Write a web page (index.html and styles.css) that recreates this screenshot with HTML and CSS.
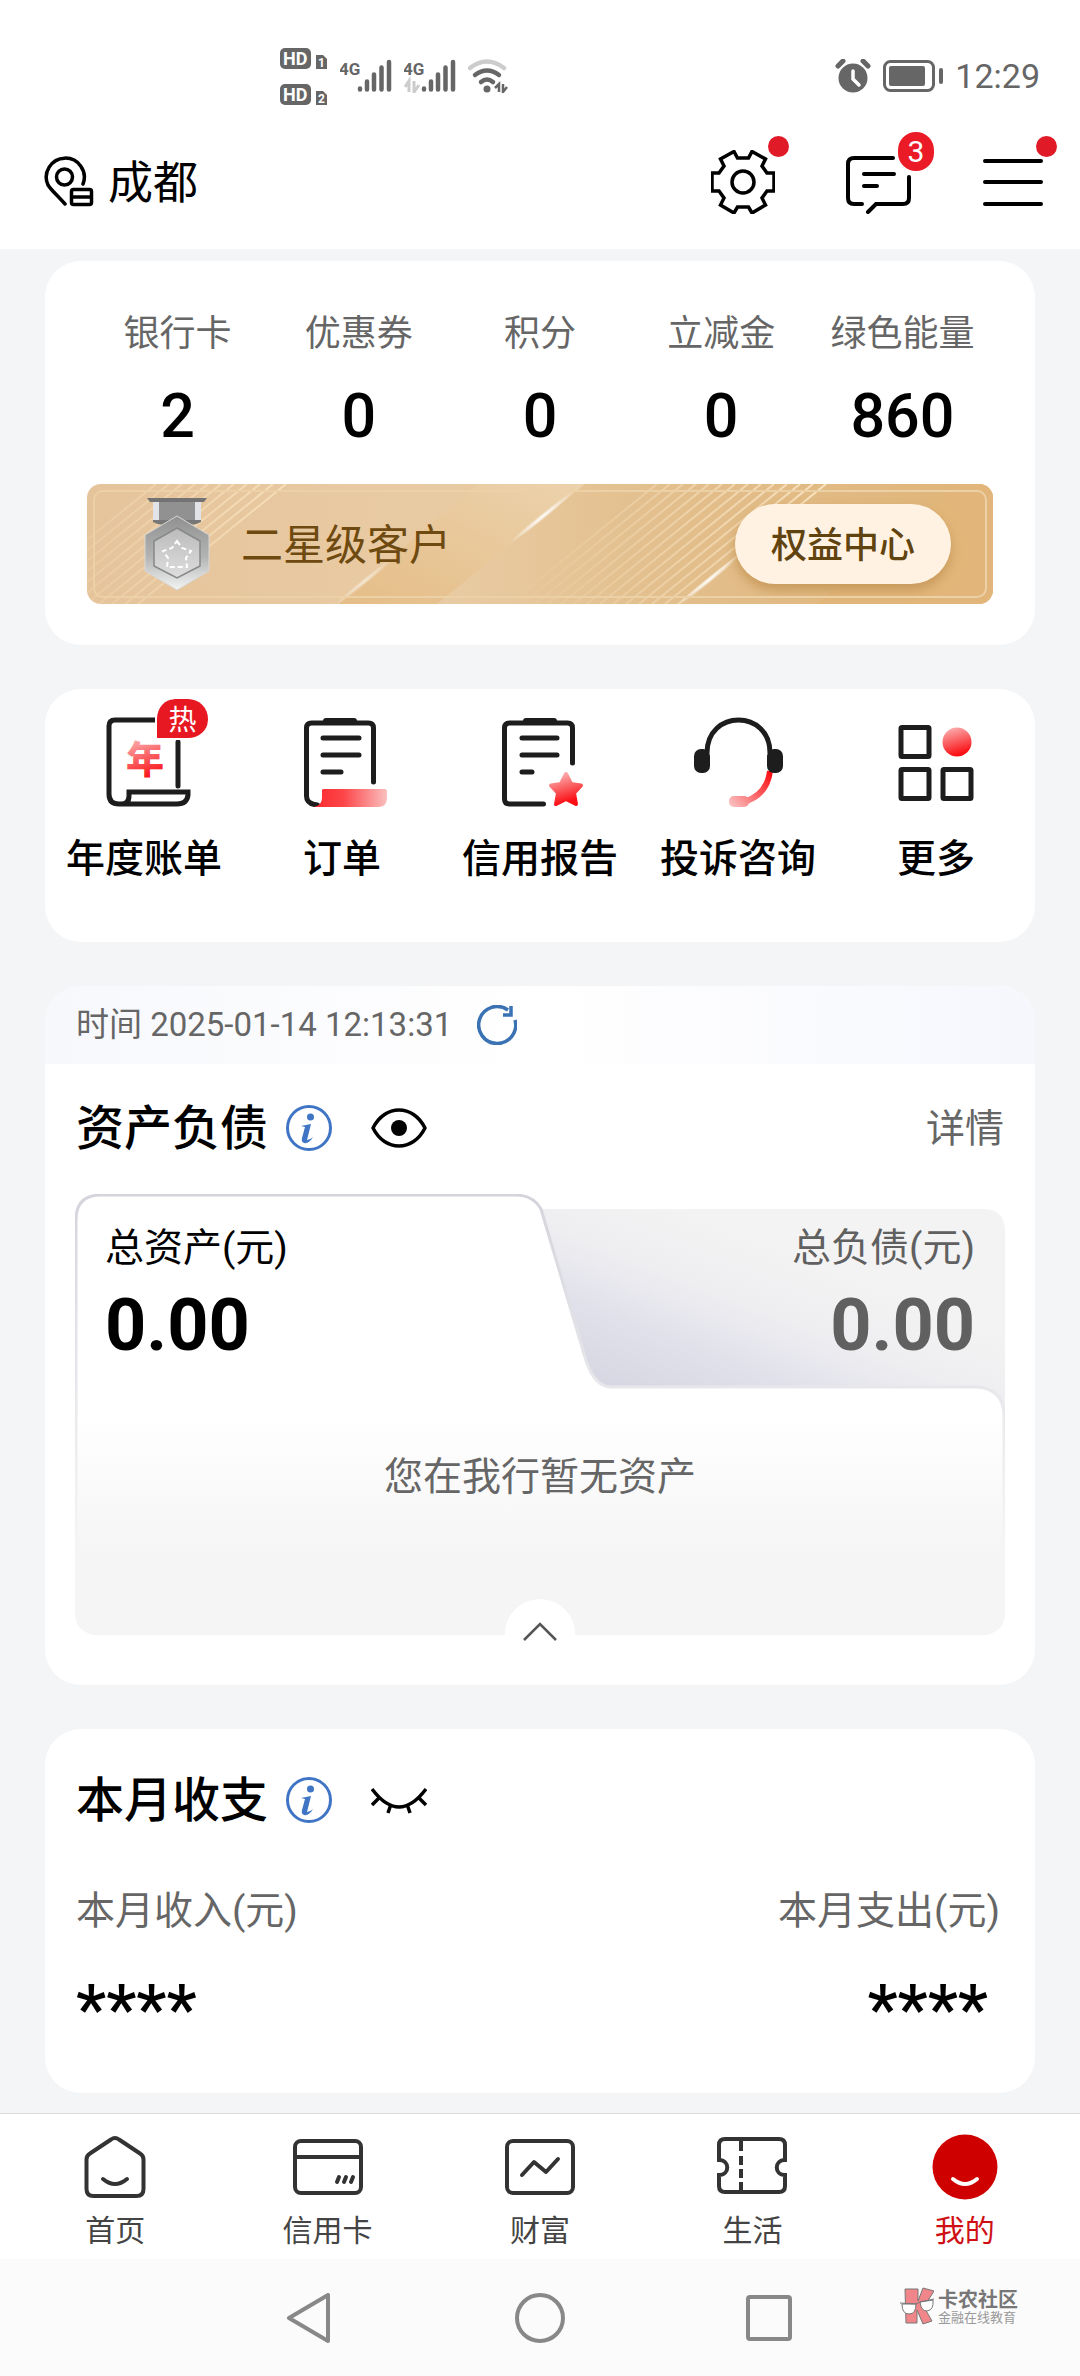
FILE: index.html
```html
<!DOCTYPE html>
<html lang="zh-CN">
<head>
<meta charset="utf-8">
<meta name="viewport" content="width=device-width, initial-scale=1">
<title>我的</title>
<link rel="stylesheet" href="styles.css">
</head>
<body>
<div class="status-bar">
  <div class="status-left">
    <svg width="48" height="58" viewBox="0 0 48 58" aria-hidden="true">
      <g fill="#666"><rect x="0" y="1" width="31" height="21" rx="5"/><path d="M36 8h7l4 4v10H36z"/><rect x="0" y="37" width="31" height="21" rx="5"/><path d="M36 44h7l4 4v10H36z"/></g>
      <g class="status-glyph" fill="#fff"><text x="3" y="18" font-size="18">HD</text><text x="38" y="20" font-size="12">1</text><text x="3" y="54" font-size="18">HD</text><text x="38" y="56" font-size="12">2</text></g>
    </svg>
    <svg width="52" height="34" viewBox="0 0 52 34" aria-hidden="true">
      <text class="status-glyph" x="-1" y="16" font-size="17" fill="#666">4G</text>
      <path d="M20 30.500v-1M27 30.500v-8M34 30.500v-15M41.500 30.500v-22M49 30.500V3" stroke="#666" stroke-width="4.500" stroke-linecap="round"/>
    </svg>
    <svg width="52" height="34" viewBox="0 0 52 34" aria-hidden="true">
      <text class="status-glyph" x="-1" y="16" font-size="17" fill="#666">4G</text>
      <path d="M20 30.500v-1M27 30.500v-8M34 30.500v-15M41.500 30.500v-22M49 30.500V3" stroke="#666" stroke-width="4.500" stroke-linecap="round"/>
      <path d="M1 28l4-6v11M10 22v11l5-7" fill="none" stroke="#ccc" stroke-width="3"/>
    </svg>
    <svg width="40" height="34" viewBox="0 0 40 34" fill="none" aria-hidden="true">
      <path d="M2 9q17-13 34 0" stroke="#ccc" stroke-width="4.500" stroke-linecap="round"/>
      <path d="M7 16q12-9 24 0M13 23q6-5 12 0" stroke="#666" stroke-width="4.500" stroke-linecap="round"/>
      <circle cx="19" cy="30" r="3.500" fill="#666"/><path d="M27 29l4-4v8M35 25v8l4-5" stroke="#666" stroke-width="2.500"/>
    </svg>
  </div>
  <div class="status-right">
    <svg width="36" height="34" viewBox="0 0 36 34" fill="none" aria-hidden="true">
      <circle cx="18" cy="19" r="14.500" fill="#666"/><path d="M3 7l5-5M33 7l-5-5" stroke="#666" stroke-width="5" stroke-linecap="round"/><path d="M18 12v8l6 6" stroke="#fff" stroke-width="3.500" stroke-linecap="round"/>
    </svg>
    <svg width="60" height="32" viewBox="0 0 60 32" fill="none" aria-hidden="true">
      <rect x="1.500" y="1.500" width="49" height="29" rx="6" stroke="#666" stroke-width="3"/><rect x="6" y="6" width="36" height="20" rx="2" fill="#666"/><rect x="56" y="8" width="4" height="16" rx="2" fill="#666"/>
    </svg>
    <time>12:29</time>
  </div>
</div>

<header class="app-header">
  <button class="location" type="button">
    <svg width="50" height="52" viewBox="0 0 50 52" fill="none" stroke="#000" stroke-width="3.500" aria-hidden="true">
      <path d="M39 28A19 19 0 1 0 4 29c3 5 8 9 17 19" stroke-linecap="round"/><circle cx="20.500" cy="21" r="8"/>
      <rect x="27.500" y="33.500" width="20" height="15" rx="2"/><path d="M27 41h20"/>
    </svg>
    <span>成都</span>
  </button>
  <div class="header-actions">
    <button class="icon-button" type="button" aria-label="设置">
      <svg width="64" height="64" viewBox="-32 -32 64 64" fill="none" stroke="#000" stroke-width="3.500" aria-hidden="true">
        <path d="M-9-30.500-5.500-24H5.500L9-30.500 22.500-23 19-16 24-9h7V9h-7l-5 7 3.500 7L9 31 5.500 25h-11L-9 31-22.500 23-19 16-24 9h-7V-9h7l5-7-3.500-7z"/><circle r="11"/>
      </svg>
      <span class="dot"></span>
    </button>
    <button class="icon-button" type="button" aria-label="消息">
      <svg width="66" height="64" viewBox="0 0 66 64" fill="none" stroke="#000" stroke-width="4" stroke-linecap="round" aria-hidden="true">
        <path d="M47 8H8q-6 0-6 6v34q0 6 6 6h8M63 27v21q0 6-6 6H30l-8 8M18 24h30M18 36h13"/>
      </svg>
      <span class="count">3</span>
    </button>
    <button class="icon-button" type="button" aria-label="菜单">
      <svg width="60" height="64" viewBox="0 0 60 64" stroke="#000" stroke-width="4" stroke-linecap="round" aria-hidden="true"><path d="M2 11h56M2 32h56M2 54h56"/></svg>
      <span class="dot"></span>
    </button>
  </div>
</header>

<main class="content">
  <section class="card overview">
    <dl class="stats">
      <div><dt>银行卡</dt><dd>2</dd></div>
      <div><dt>优惠券</dt><dd>0</dd></div>
      <div><dt>积分</dt><dd>0</dd></div>
      <div><dt>立减金</dt><dd>0</dd></div>
      <div><dt>绿色能量</dt><dd>860</dd></div>
    </dl>
    <div class="banner">
      <svg class="banner-art" viewBox="0 0 906 120" preserveAspectRatio="xMidYMid slice" aria-hidden="true">
        <defs>
          <linearGradient id="gold"><stop offset="0" stop-color="#e6c49b"/><stop offset=".4" stop-color="#e9cba3"/><stop offset=".6" stop-color="#e3c08f"/><stop offset="1" stop-color="#e0b478"/></linearGradient>
          <linearGradient id="facet" x1="0" y1="1" x2="1" y2="0"><stop offset="0" stop-color="#e5bd87"/><stop offset="1" stop-color="#ecd2ac"/></linearGradient>
          <linearGradient id="fadeA" gradientUnits="userSpaceOnUse" x1="0" y1="0" x2="200" y2="0"><stop offset="0" stop-color="#f6dfba" stop-opacity=".2"/><stop offset="1" stop-color="#f6dfba"/></linearGradient>
          <linearGradient id="fadeB" gradientUnits="userSpaceOnUse" x1="450" y1="0" x2="740" y2="0"><stop offset="0" stop-color="#f6dfba" stop-opacity=".1"/><stop offset="1" stop-color="#f8e3c2"/></linearGradient>
          <radialGradient id="glint"><stop offset="0" stop-color="#fff"/><stop offset="1" stop-color="#fff" stop-opacity="0"/></radialGradient>
        </defs>
        <rect width="906" height="120" fill="url(#gold)"/>
        <path d="M390 0H498L350 120H252z" fill="url(#facet)"/>
        <path d="M872 0H906V120H730z" fill="#e2b67a"/>
        <path d="M199 0 51 120M186 0 38 120M173 0 25 120M160 0 12 120M147 0-1 120M134 0-14 120M121 0-27 120M108 0-40 120M95 0-53 120M82 0-66 120M69 0-79 120" stroke="url(#fadeA)" stroke-width="2"/>
        <path d="M739 0 591 120M726 0 578 120M713 0 565 120M700 0 552 120M687 0 539 120M674 0 526 120M661 0 513 120M648 0 500 120M635 0 487 120M622 0 474 120M609 0 461 120M596 0 448 120M583 0 435 120M570 0 422 120" stroke="url(#fadeB)" stroke-width="2"/>
        <g fill="url(#glint)"><ellipse cx="455" cy="33" rx="42" ry="3" transform="rotate(-39 455 33)"/><ellipse cx="278" cy="97" rx="40" ry="3" opacity=".6" transform="rotate(-39 278 97)"/><ellipse cx="622" cy="96" rx="42" ry="3" transform="rotate(-39 622 96)"/></g>
      </svg>
      <svg class="medal" width="66" height="96" viewBox="0 0 66 96" aria-hidden="true">
        <defs>
          <linearGradient id="silver" x2="0" y2="1"><stop offset="0" stop-color="#909090"/><stop offset=".55" stop-color="#b2b4b4"/><stop offset="1" stop-color="#f4f4f4"/></linearGradient>
          <linearGradient id="plate" x2="0" y2="1"><stop offset="0" stop-color="#bbb"/><stop offset="1" stop-color="#dedede"/></linearGradient>
        </defs>
        <path d="M9 3h48v23q-10 6-24 0-14 6-24 0z" fill="#777"/><path d="M9 4h6v20H9zM51 4h6v20h-6z" fill="#e2e3e8"/><path d="M15 4h36v20H15z" fill="#919191"/><path d="M3 2h60l-3 4H6z" fill="#737373"/>
        <path d="M33 20 65 39v36L33 94 1 75V39z" fill="url(#silver)" stroke="#d7d7d5" stroke-width="1"/>
        <path d="M33 32 56 45v25L33 82 10 70V45z" fill="url(#plate)" stroke="#888" stroke-width="1.500"/>
        <path d="M33 45l5 7 9 3-5 7 1 9H23l1-9-5-7 9-3z" fill="none" stroke="#fff" stroke-width="2" stroke-dasharray="5 3"/>
      </svg>
      <span class="level">二星级客户</span>
      <button class="benefits" type="button">权益中心</button>
    </div>
  </section>

  <nav class="card shortcuts" aria-label="快捷功能">
    <a href="#annual">
      <span class="shortcut-icon">
        <svg width="96" height="90" viewBox="0 0 96 90" fill="none" stroke="#1d1d1d" stroke-width="5" stroke-linecap="round" aria-hidden="true">
          <defs><linearGradient id="redDown" x1="0" y1="0" x2="0.300" y2="1"><stop offset="0" stop-color="#fbbcbc"/><stop offset="1" stop-color="#fa1015"/></linearGradient></defs>
          <path d="M60 3H19q-6 0-6 6v68q0 10 10 10h58q10 0 11-9v-3H33v4q0 8-8 8M82 25v44"/>
          <text class="year" x="30" y="56" font-size="38" fill="url(#redDown)" stroke="none">年</text>
        </svg>
        <span class="hot">热</span>
      </span>
      <span>年度账单</span>
    </a>
    <a href="#orders">
      <span class="shortcut-icon">
        <svg width="96" height="90" viewBox="0 0 96 90" fill="none" stroke="#1d1d1d" stroke-width="5" stroke-linecap="round" aria-hidden="true">
          <defs><linearGradient id="redRight"><stop offset="0" stop-color="#fb2a2e"/><stop offset=".4" stop-color="#fc4548"/><stop offset="1" stop-color="#fbbfbf"/></linearGradient></defs>
          <path d="M79.500 65V11q0-5-5-5h-57q-5 0-5 5v68q0 8 11 9"/><path d="M32 4h28" stroke-width="6"/><path d="M29 21h36M29 38h36M29 55h18"/>
          <path d="M28 73q0-1 2-1h61q2 0 2 3v6q0 9-9 9H20q8-2 8-9z" fill="url(#redRight)" stroke="none"/>
        </svg>
      </span>
      <span>订单</span>
    </a>
    <a href="#credit">
      <span class="shortcut-icon">
        <svg width="96" height="90" viewBox="0 0 96 90" fill="none" stroke="#1d1d1d" stroke-width="5" stroke-linecap="round" aria-hidden="true">
          <path d="M80.500 46V11q0-5-5-5h-58q-5 0-5 5v71q0 5 5 5h34"/><path d="M34 4h28" stroke-width="6"/><path d="M30 21h35M30 38h35M30 55h10"/>
          <path d="M74 57l5 10 10 1.500-7 7.500 2 11-10-5-10 5 2-11-7-7.500 10-1.500z" fill="url(#redDown)" stroke="url(#redDown)" stroke-width="4" stroke-linejoin="round"/>
        </svg>
      </span>
      <span>信用报告</span>
    </a>
    <a href="#support">
      <span class="shortcut-icon">
        <svg width="96" height="90" viewBox="0 0 96 90" fill="none" aria-hidden="true">
          <defs><linearGradient id="redMic" gradientUnits="userSpaceOnUse" x1="80" y1="56" x2="42" y2="88"><stop offset="0" stop-color="#fa1015"/><stop offset="1" stop-color="#fbbcbc"/></linearGradient></defs>
          <path d="M80 54q-3 24-26 31" stroke="url(#redMic)" stroke-width="6"/><rect x="39" y="79" width="20" height="11" rx="5" fill="url(#redMic)"/>
          <path d="M17 36C17-8 80-8 80 36" stroke="#1d1d1d" stroke-width="5"/>
          <rect x="4" y="32" width="16" height="24" rx="7" fill="#1d1d1d"/><rect x="77" y="32" width="16" height="24" rx="7" fill="#1d1d1d"/>
        </svg>
      </span>
      <span>投诉咨询</span>
    </a>
    <a href="#more">
      <span class="shortcut-icon">
        <svg width="96" height="90" viewBox="0 0 96 90" fill="none" stroke="#1d1d1d" stroke-width="5" aria-hidden="true">
          <rect x="13" y="10.500" width="28" height="29" rx="1"/><rect x="13" y="52.500" width="28" height="29" rx="1"/><rect x="55" y="52.500" width="28" height="29" rx="1"/><circle cx="69" cy="25" r="14.500" fill="url(#redDown)" stroke="none"/>
        </svg>
      </span>
      <span>更多</span>
    </a>
  </nav>

  <section class="card assets">
    <div class="updated">
      <span>时间 2025-01-14 12:13:31</span>
      <button class="icon-button" type="button" aria-label="刷新">
        <svg width="40" height="40" viewBox="0 0 40 40" fill="none" stroke="#3a72b4" stroke-width="3.500" aria-hidden="true"><path d="M38 15a18.500 18.500 0 1 1-7-10M34 1v9h-8"/></svg>
      </button>
    </div>
    <div class="section-head">
      <h2>资产负债</h2>
      <button class="icon-button" type="button" aria-label="说明">
        <svg width="46" height="46" viewBox="0 0 46 46" aria-hidden="true"><circle cx="23" cy="23" r="21.500" fill="none" stroke="#3f75c4" stroke-width="3"/><circle cx="24.500" cy="12" r="3.500" fill="#3f75c4"/><path d="M15 21q5-1 10-2l-4 16q3 0 6-3-4 7-9 6-3-1-2-5l3-11z" fill="#3f75c4"/></svg>
      </button>
      <button class="icon-button eye" type="button" aria-label="隐藏金额">
        <svg width="56" height="46" viewBox="0 0 56 46" aria-hidden="true"><path d="M2 23C14-1 42-1 54 23 42 47 14 47 2 23z" fill="none" stroke="#000" stroke-width="3.500" stroke-linejoin="round"/><circle cx="28" cy="23" r="8" fill="#000"/></svg>
      </button>
      <a class="details" href="#details">详情</a>
    </div>
    <div class="balance">
      <svg class="balance-shape" viewBox="0 0 930 441" preserveAspectRatio="none" aria-hidden="true">
        <defs>
          <linearGradient id="sheet" x2="0" y2="1"><stop offset="0" stop-color="#fff"/><stop offset=".5" stop-color="#fff"/><stop offset=".82" stop-color="#f5f5f6"/><stop offset="1" stop-color="#f5f5f6"/></linearGradient>
          <linearGradient id="edge" x2="0" y2="1"><stop offset="0" stop-color="#d4d5dc"/><stop offset=".4" stop-color="#e6e6ea"/><stop offset=".8" stop-color="#f5f5f6"/></linearGradient>
          <linearGradient id="debt" gradientUnits="userSpaceOnUse" x1="580" y1="210" x2="650" y2="30"><stop offset="0" stop-color="#d6d7e2"/><stop offset=".35" stop-color="#e1e1eb"/><stop offset=".65" stop-color="#eeeef1"/><stop offset="1" stop-color="#f3f3f3"/></linearGradient>
        </defs>
        <path d="M440 15H908q22 0 22 22V240H440z" fill="url(#debt)"/>
        <path d="M1 416V26Q1 1 26 1H440Q458 1 466 15L509 160Q518 193 536 193H902Q929 195 929 222V416Q929 440 904 440H26Q1 440 1 416z" fill="url(#sheet)" stroke="url(#edge)" stroke-width="3"/>
      </svg>
      <dl class="totals">
        <div><dt>总资产(元)</dt><dd>0.00</dd></div>
        <div class="debt"><dt>总负债(元)</dt><dd>0.00</dd></div>
      </dl>
      <p class="empty">您在我行暂无资产</p>
      <button class="collapse" type="button" aria-label="收起">
        <svg width="36" height="20" viewBox="0 0 36 20" fill="none" stroke="#555" stroke-width="2.500" aria-hidden="true"><path d="M2 18 18 2l16 16"/></svg>
      </button>
    </div>
  </section>

  <section class="card monthly">
    <div class="section-head">
      <h2>本月收支</h2>
      <button class="icon-button" type="button" aria-label="说明">
        <svg width="46" height="46" viewBox="0 0 46 46" aria-hidden="true"><circle cx="23" cy="23" r="21.500" fill="none" stroke="#3f75c4" stroke-width="3"/><circle cx="24.500" cy="12" r="3.500" fill="#3f75c4"/><path d="M15 21q5-1 10-2l-4 16q3 0 6-3-4 7-9 6-3-1-2-5l3-11z" fill="#3f75c4"/></svg>
      </button>
      <button class="icon-button eye" type="button" aria-label="显示金额">
        <svg width="56" height="46" viewBox="0 0 56 46" fill="none" stroke="#000" stroke-width="3.500" aria-hidden="true"><path d="M1 12q27 36 54 0M9 20l-8 8M20 27l-3 9M36 27l3 9M47 20l8 8"/></svg>
      </button>
    </div>
    <dl class="flows">
      <div><dt>本月收入(元)</dt><dd>****</dd></div>
      <div class="expense"><dt>本月支出(元)</dt><dd>****</dd></div>
    </dl>
  </section>
</main>

<nav class="tab-bar" aria-label="主导航">
  <a href="#home">
    <svg width="72" height="72" viewBox="0 0 72 72" fill="none" stroke="#333" stroke-width="4" stroke-linecap="round" aria-hidden="true"><path d="M32 8.500q4-3 8 0l21 14q3.500 2 3.500 6V58q0 7-7 7h-43q-7 0-7-7V28.500q0-4 3.500-6zM24 48q12 10 24 0"/></svg>
    首页
  </a>
  <a href="#card">
    <svg width="72" height="72" viewBox="0 0 72 72" fill="none" stroke="#333" stroke-width="4" stroke-linecap="round" aria-hidden="true"><rect x="3" y="10" width="66" height="52" rx="6"/><path d="M4 26h64M47 46l-2 5M54 46l-2 5M61 46l-2 5"/></svg>
    信用卡
  </a>
  <a href="#wealth">
    <svg width="72" height="72" viewBox="0 0 72 72" fill="none" stroke="#333" stroke-width="4" stroke-linecap="round" aria-hidden="true"><rect x="3" y="10" width="66" height="52" rx="6"/><path d="M18 44l12-13 12 10 12-13" stroke-linejoin="round"/></svg>
    财富
  </a>
  <a href="#life">
    <svg width="72" height="72" viewBox="0 0 72 72" fill="none" stroke="#333" stroke-width="4" aria-hidden="true"><path d="M3 29V14q0-6 6-6h54q6 0 6 6v15c-11 0-11 15 0 15v11q0 6-6 6H9q-6 0-6-6V44c11 0 11-15 0-15z"/><path d="M25 9v11M25 25v9M25 38v9M25 51v10"/></svg>
    生活
  </a>
  <a class="active" href="#me" aria-current="page">
    <svg width="72" height="72" viewBox="0 0 72 72" fill="none" aria-hidden="true"><circle cx="36" cy="36" r="32.500" fill="#cf0000"/><path d="M24 48q12 10 24 0" stroke="#fff" stroke-width="4" stroke-linecap="round"/></svg>
    我的
  </a>
</nav>

<div class="system-nav">
  <button class="icon-button" type="button" aria-label="返回"><svg width="50" height="50" viewBox="0 0 50 50" fill="none" stroke="#888" stroke-width="4" stroke-linejoin="round" aria-hidden="true"><path d="M4 25 43 2v46z"/></svg></button>
  <button class="icon-button" type="button" aria-label="主屏幕"><svg width="50" height="50" viewBox="0 0 50 50" fill="none" stroke="#888" stroke-width="4" aria-hidden="true"><circle cx="25" cy="25" r="23"/></svg></button>
  <button class="icon-button" type="button" aria-label="最近任务"><svg width="50" height="50" viewBox="0 0 50 50" fill="none" stroke="#888" stroke-width="4" aria-hidden="true"><rect x="3" y="4" width="42" height="42" rx="2"/></svg></button>
  <div class="brand">
    <svg width="34" height="38" viewBox="0 0 34 38" stroke="#777" stroke-width="1" aria-hidden="true"><path d="M5 2h13v12L23 1l11 3-10 16 8 14-9 3-6-14v13H6z" fill="#f1868a"/><path d="M2 17h14q0 10-7 10t-7-10zM20 15l13-2q1 10-6 11-6 0-7-9z" fill="#fff"/><path d="M0 16l16 1 4-2 14-3" fill="none"/></svg>
    <p><strong>卡农社区</strong><span>金融在线教育</span></p>
  </div>
</div>
</body>
</html>
```
FILE: styles.css
```css
* { box-sizing: border-box; }

body {
  margin: 0;
  min-height: 100vh;
  display: flex;
  flex-direction: column;
  background: #f4f5f7;
  color: #000;
  font-family: Roboto, "Noto Sans CJK SC", sans-serif;
  font-size: 39px;
  line-height: 54px;
}

h2, p, dl, dd { margin: 0; }
a { color: inherit; text-decoration: none; }
svg { display: block; flex: none; }

button {
  border: 0;
  padding: 0;
  background: none;
  color: inherit;
  font: inherit;
}

.icon-button { position: relative; flex: none; }

/* Status bar */
.status-bar {
  display: flex;
  justify-content: space-between;
  align-items: center;
  min-height: 115px;
  padding: 36px 40px 0 280px;
  background: #fff;
  color: #666;
}
.status-left, .status-right { display: flex; align-items: center; gap: 12px; }
.status-right time { font-size: 34px; line-height: 40px; }
.status-glyph { font-family: Roboto, sans-serif; font-weight: 700; }

/* Header */
.app-header {
  display: flex;
  justify-content: space-between;
  align-items: center;
  min-height: 134px;
  padding: 0 37px 0 44px;
  background: #fff;
}
.location { display: flex; align-items: center; gap: 14px; font-size: 45px; }
.location span { padding-top: 4px; }
.header-actions { display: flex; gap: 71px; }
.dot {
  position: absolute;
  top: -14px;
  right: -14px;
  width: 21px;
  height: 21px;
  border-radius: 50%;
  background: #e01a26;
}
.count {
  position: absolute;
  top: -18px;
  right: -22px;
  width: 36px;
  height: 39px;
  border-radius: 20px;
  background: #ea1a26;
  color: #fff;
  font-size: 30px;
  line-height: 40px;
  text-align: center;
}

/* Cards */
.content {
  flex: 1;
  display: flex;
  flex-direction: column;
  gap: 44px;
  padding: 12px 45px 20px;
}
.card { border-radius: 36px; background: #fff; }

.overview { padding: 46px 42px 41px; }
.stats { display: grid; grid-template-columns: repeat(5, 1fr); text-align: center; }
.stats dt { color: #666; font-size: 36px; white-space: nowrap; }
.stats dd { margin-top: 19px; font-size: 61px; font-weight: 500; line-height: 72px; }

.banner {
  position: relative;
  display: flex;
  align-items: center;
  min-height: 120px;
  margin-top: 32px;
  padding: 0 42px 0 57px;
  border-radius: 14px;
  overflow: hidden;
}
.banner::after {
  content: "";
  position: absolute;
  inset: 6px;
  border: 2px solid #ecd0a6;
  border-radius: 10px;
  pointer-events: none;
}
.banner-art { position: absolute; inset: 0; width: 100%; height: 100%; }
.medal, .level, .benefits { position: relative; }
.level { margin-left: 31px; padding-top: 4px; color: #6f4a10; font-size: 42px; }
.benefits {
  margin-left: auto;
  padding: 15px 36px 11px;
  border-radius: 40px;
  background: #fff2e2;
  box-shadow: 0 6px 12px #c7995a;
  color: #60430e;
  font-size: 36px;
  font-weight: 500;
}

.shortcuts {
  display: grid;
  grid-template-columns: repeat(5, 1fr);
  padding: 28px 0 56px;
  font-weight: 500;
  text-align: center;
}
.shortcuts a { display: flex; flex-direction: column; align-items: center; gap: 25px; white-space: nowrap; }
.shortcut-icon { position: relative; }
.year { font-weight: 900; }
.hot {
  position: absolute;
  top: -18px;
  left: 59px;
  width: 53px;
  height: 41px;
  border: 2px solid #fff;
  border-width: 0 0 2px 2px;
  border-radius: 20px 20px 20px 0;
  background: #e71822;
  color: #fff;
  font-size: 28px;
  font-weight: 400;
  line-height: 44px;
}

.updated {
  display: flex;
  align-items: center;
  gap: 25px;
  min-height: 78px;
  padding: 0 31px;
  border-radius: 36px 36px 0 0;
  background: linear-gradient(90deg, #f7f8fc, #fff 50%, #f6f7fd);
  color: #666;
  font-size: 33px;
}
.assets { padding-bottom: 50px; }
.section-head { display: flex; align-items: center; min-height: 48px; padding: 0 31px; }
.assets .section-head { margin: 40px 0 42px; }
.section-head h2 { margin-right: 18px; padding-top: 2px; font-size: 48px; font-weight: 500; line-height: 46px; }
.eye { margin-left: 39px; }
.details { margin-left: auto; padding-top: 2px; color: #666; line-height: 46px; }

.balance { position: relative; margin: 0 30px; padding: 27px 30px 131px; }
.balance-shape { position: absolute; inset: 0; width: 100%; height: 100%; }
.totals { position: relative; display: flex; justify-content: space-between; }
.totals dd { margin-top: 15px; font-size: 72px; font-weight: 700; line-height: 72px; }
.debt { color: #606060; text-align: right; }
.empty { position: relative; margin-top: 88px; color: #666; text-align: center; }
.collapse {
  position: absolute;
  left: 50%;
  bottom: -34px;
  display: grid;
  place-items: center;
  width: 70px;
  height: 70px;
  margin-left: -35px;
  padding-bottom: 5px;
  border-radius: 50%;
  background: #fff;
}

.monthly { padding: 47px 0 47px; }
.flows { display: flex; justify-content: space-between; margin-top: 60px; padding: 0 35px 0 31px; }
.flows dt { color: #666; }
.flows dd { margin-top: 36px; font-size: 68px; font-weight: 500; line-height: 72px; }
.expense { text-align: right; }
.expense dd { padding-right: 12px; }

/* Bottom navigation */
.tab-bar {
  display: grid;
  grid-template-columns: repeat(5, 1fr);
  padding: 17px 9px 10px;
  border-top: 1px solid #d9dadc;
  background: #fff;
  color: #444;
  font-size: 30px;
  line-height: 36px;
}
.tab-bar a { display: flex; flex-direction: column; align-items: center; gap: 10px; }
.tab-bar .active { color: #cf0f14; }

.system-nav {
  position: relative;
  display: flex;
  justify-content: center;
  align-items: flex-start;
  gap: 180px;
  min-height: 117px;
  padding-top: 34px;
  background: #fbfbfb;
}
.brand {
  position: absolute;
  top: 28px;
  right: 62px;
  display: flex;
  gap: 4px;
  color: #777;
}
.brand p { display: flex; flex-direction: column; padding-top: 2px; }
.brand strong { font-size: 20px; line-height: 22px; }
.brand span { color: #999; font-size: 13px; line-height: 14px; }
```
